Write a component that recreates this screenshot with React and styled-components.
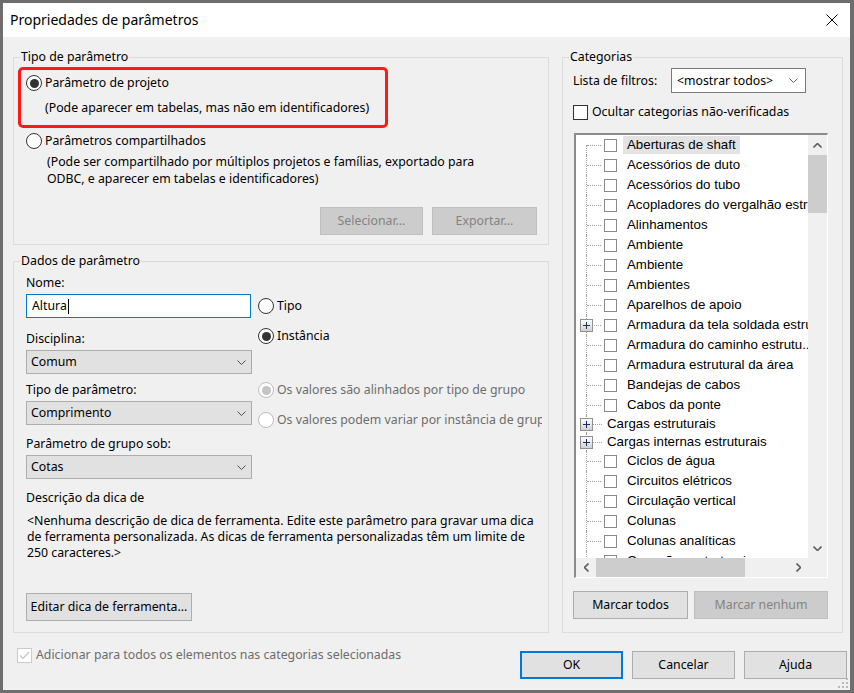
import React from "react"
import styled, { createGlobalStyle, css } from "styled-components"

const GlobalStyle = createGlobalStyle`
  * { box-sizing: border-box; }
  html, body { margin: 0; padding: 0; background: #6e6e6e; }
  body {
    font-family: "Noto Sans", "Liberation Sans", sans-serif;
    font-size: 12.3px;
    line-height: 16px;
    color: #000;
  }
`

const Window = styled.div`
  position: relative;
  width: 854px;
  height: 693px;
  border: 3px solid #6e6e6e;
  border-right-width: 4px;
  background: #f0f0f0;
  display: flex;
  flex-direction: column;
  overflow: hidden;
`

const TitleBar = styled.div`
  height: 34px;
  flex: none;
  background: #fff;
  display: flex;
  align-items: center;
  justify-content: space-between;
  padding: 0 12px 0 7px;
`

const Title = styled.div`
  font-size: 14px;
  line-height: 20px;
`

const Body = styled.div`
  flex: 1;
  display: flex;
  flex-direction: column;
  padding: 12px 7px 0 10px;
`

const Main = styled.div`
  height: 584px;
  display: flex;
  gap: 13px;
`

const LeftCol = styled.div`
  width: 536px;
  display: flex;
  flex-direction: column;
  gap: 8px;
`

const Group = styled.fieldset`
  margin: 0;
  padding: 0;
  min-width: 0;
  border: 1px solid #dcdcdc;
  display: flex;
  flex-direction: column;
  ${(p) => p.$grow && css`flex: 1;`}
  ${(p) => p.$w && css`width: ${p.$w}px;`}
`

const Legend = styled.legend`
  margin-left: 6px;
  padding: 0 1px;
  line-height: 16px;
`

/* ---------- Tipo de parâmetro ---------- */

const TypeContent = styled.div`
  padding: 2px 11px 9px 4px;
  display: flex;
  flex-direction: column;
`

const Highlight = styled.div`
  width: 370px;
  height: 61px;
  border: 3px solid #ff1a1a;
  border-radius: 5px;
  padding: 5px 0 0 5px;
`

const RadioRow = styled.div`
  display: flex;
  align-items: center;
  gap: 3px;
  height: 16px;
  white-space: nowrap;
  margin-top: ${(p) => p.$top || 0}px;
  margin-left: ${(p) => p.$left || 0}px;
  color: ${(p) => (p.$disabled ? "#6d6d6d" : "#000")};
`

const Radio = styled.span`
  flex: none;
  width: 16px;
  height: 16px;
  border-radius: 50%;
  border: 1px solid ${(p) => (p.$disabled ? "#bcbcbc" : "#333")};
  background: #fff;
  display: flex;
  align-items: center;
  justify-content: center;
  &::after {
    content: "";
    display: ${(p) => (p.$checked ? "block" : "none")};
    width: 9px;
    height: 9px;
    border-radius: 50%;
    background: ${(p) => (p.$disabled ? "#c4c4c4" : "#333")};
  }
`

const Note = styled.div`
  margin-top: ${(p) => p.$top || 0}px;
  margin-left: ${(p) => p.$left || 0}px;
  line-height: ${(p) => p.$lh || 16}px;
  white-space: nowrap;
`

const ButtonRow = styled.div`
  display: flex;
  justify-content: ${(p) => p.$justify || "flex-start"};
  gap: ${(p) => p.$gap || 0}px;
  margin-top: ${(p) => p.$top || 0}px;
`

const Button = styled.button`
  font: inherit;
  width: ${(p) => p.$w}px;
  height: 28px;
  padding: 0;
  background: #e1e1e1;
  border: 1px solid #adadad;
  color: #000;
  display: flex;
  align-items: center;
  justify-content: center;
  flex: none;
  ${(p) =>
    p.$disabled &&
    css`
      background: #cccccc;
      border-color: #bfbfbf;
      color: #838383;
    `}
  ${(p) =>
    p.$default &&
    css`
      border: 2px solid #0078d7;
    `}
`

/* ---------- Dados de parâmetro ---------- */

const DataContent = styled.div`
  flex: 1;
  padding: 6px 6px 11px 12px;
  display: flex;
  flex-direction: column;
`

const DataGrid = styled.div`
  display: grid;
  grid-template-columns: 226px 1fr;
  column-gap: 6px;
`

const FieldStack = styled.div`
  display: flex;
  flex-direction: column;
`

const OptionStack = styled.div`
  display: flex;
  flex-direction: column;
  overflow: hidden;
`

const Field = styled.div`
  display: flex;
  flex-direction: column;
  gap: 3px;
  margin-top: ${(p) => p.$top || 0}px;
`

const TextInput = styled.div`
  width: 225px;
  height: 24px;
  background: #fff;
  border: 1px solid #0078d7;
  padding-left: 5px;
  display: flex;
  align-items: center;
`

const Caret = styled.span`
  width: 1px;
  height: 15px;
  background: #000;
  margin-left: 1px;
`

const Combo = styled.div`
  width: ${(p) => p.$w || 226}px;
  height: ${(p) => p.$h || 24}px;
  background: ${(p) => (p.$white ? "#fff" : "#e1e1e1")};
  border: 1px solid ${(p) => (p.$white ? "#7a7a7a" : "#adadad")};
  padding: 0 ${(p) => p.$pr || 5}px 0 ${(p) => p.$pl || 4}px;
  display: flex;
  align-items: center;
  justify-content: space-between;
  flex: none;
`

const Paragraph = styled.div`
  margin: 7px 0 0 1px;
  line-height: 16px;
  white-space: nowrap;
`

/* ---------- Categorias ---------- */

const CatContent = styled.div`
  flex: 1;
  padding: 3px 0 13px 10px;
  display: flex;
  flex-direction: column;
`

const FilterRow = styled.div`
  display: flex;
  align-items: center;
  height: 25px;
`

const FilterLabel = styled.div`
  width: 98px;
`

const CheckRow = styled.div`
  display: flex;
  align-items: center;
  gap: 4px;
  height: 16px;
  white-space: nowrap;
  margin-top: ${(p) => p.$top || 0}px;
  margin-left: ${(p) => p.$left || 0}px;
  color: ${(p) => (p.$disabled ? "#6d6d6d" : "#000")};
`

const CheckBox = styled.span`
  flex: none;
  width: ${(p) => p.$size || 15}px;
  height: ${(p) => p.$size || 15}px;
  background: #fff;
  border: 1px solid ${(p) => p.$border || "#333"};
  display: flex;
  align-items: center;
  justify-content: center;
`

const Tree = styled.div`
  width: 254px;
  height: 445px;
  margin: 13px 0 0 1px;
  border-style: solid;
  border-width: 2px 1px 1px 2px;
  border-color: #8c8c8c #ffffff #ffffff #8c8c8c;
  background: #fff;
  display: grid;
  grid-template-columns: 1fr 19px;
  grid-template-rows: 1fr 19px;
`

const Viewport = styled.div`
  overflow: hidden;
  padding-left: 10px;
  font-family: "Liberation Sans", Arial, sans-serif;
  font-size: 13.3px;
`

const TreeRow = styled.div`
  display: flex;
  align-items: center;
  height: ${(p) => (p.$box ? 20 : 18)}px;
  white-space: nowrap;
`

const Connector = styled.span`
  position: relative;
  flex: none;
  align-self: stretch;
  width: ${(p) => (p.$box ? 18 : 17)}px;
  border-left: 1px dotted #a0a0a0;
  ${(p) => p.$first && css`border-left-color: transparent;`}
  &::before {
    content: "";
    display: ${(p) => (p.$first ? "block" : "none")};
    position: absolute;
    left: -1px;
    top: 50%;
    bottom: 0;
    border-left: 1px dotted #a0a0a0;
  }
  &::after {
    content: "";
    position: absolute;
    left: 0;
    right: ${(p) => (p.$box ? 3 : 1)}px;
    top: 50%;
    border-top: 1px dotted #a0a0a0;
  }
`

const Expander = styled.svg`
  position: absolute;
  left: -7px;
  top: 50%;
  margin-top: -6px;
  z-index: 1;
`

const TreeBox = styled.span`
  flex: none;
  width: 13px;
  height: 13px;
  border: 1px solid #8a8a8a;
  background: #fff;
`

const TreeLabel = styled.span`
  height: 18px;
  line-height: 18px;
  padding: 0 4px;
  margin-left: ${(p) => (p.$box ? 6 : 0)}px;
  background: ${(p) => (p.$selected ? "#e3e3e3" : "transparent")};
`

const VScroll = styled.div`
  background: #f0f0f0;
  display: flex;
  flex-direction: column;
`

const HScroll = styled.div`
  background: #f0f0f0;
  display: flex;
`

const Corner = styled.div`
  background: #f0f0f0;
`

const Arrow = styled.div`
  flex: none;
  width: ${(p) => (p.$horizontal ? "20px" : "auto")};
  height: ${(p) => (p.$horizontal ? "auto" : "20px")};
  display: flex;
  align-items: center;
  justify-content: center;
`

const Thumb = styled.div`
  flex: none;
  background: #cdcdcd;
  ${(p) => (p.$horizontal ? css`width: ${p.$len}px;` : css`height: ${p.$len}px;`)}
`

const Spacer = styled.div`
  flex: 1;
`

/* ---------- Footer ---------- */

const Footer = styled.div`
  display: flex;
  justify-content: space-between;
  align-items: flex-start;
  padding-top: 14px;
`

const FooterButtons = styled.div`
  display: flex;
  gap: 9px;
  margin: 4px -4px 0 0;
`

const Grip = styled.svg`
  position: absolute;
  right: 1px;
  bottom: 1px;
`

/* ---------- icons ---------- */

const Chevron = ({ dir = "down", color = "#505050", w = 9, sw = 1 }) => {
  const pts = {
    down: "0.5,0.5 4.5,4.5 8.5,0.5",
    up: "0.5,4.5 4.5,0.5 8.5,4.5",
  }
  if (dir === "left" || dir === "right") {
    const p = dir === "left" ? "4.5,0.5 0.5,4.5 4.5,8.5" : "0.5,0.5 4.5,4.5 0.5,8.5"
    return (
      <svg width="5" height="9" viewBox="0 0 5 9">
        <polyline points={p} fill="none" stroke={color} strokeWidth={sw} />
      </svg>
    )
  }
  return (
    <svg width={w} height="5" viewBox="0 0 9 5">
      <polyline points={pts[dir]} fill="none" stroke={color} strokeWidth={sw} />
    </svg>
  )
}

const CloseIcon = () => (
  <svg width="12" height="12" viewBox="0 0 12 12">
    <path d="M0.5 0.5 L11.5 11.5 M11.5 0.5 L0.5 11.5" stroke="#000" strokeWidth="1" />
  </svg>
)

const PlusBox = () => (
  <Expander width="13" height="13" viewBox="0 0 13 13">
    <defs>
      <linearGradient id="pb" x1="0" y1="0" x2="0" y2="1">
        <stop offset="0" stopColor="#ffffff" />
        <stop offset="1" stopColor="#d0d0d0" />
      </linearGradient>
    </defs>
    <rect x="0.5" y="0.5" width="12" height="12" fill="url(#pb)" stroke="#919191" />
    <path d="M3 6.5 H10 M6.5 3 V10" stroke="#1c2c5c" strokeWidth="1" />
  </Expander>
)

const CheckMark = ({ color }) => (
  <svg width="11" height="9" viewBox="0 0 11 9">
    <polyline points="1,4.5 4,7.5 10,1" fill="none" stroke={color} strokeWidth="1.2" />
  </svg>
)

const categories = [
  { t: "Aberturas de shaft", selected: true },
  { t: "Acessórios de duto" },
  { t: "Acessórios do tubo" },
  { t: "Acopladores do vergalhão estrutural" },
  { t: "Alinhamentos" },
  { t: "Ambiente" },
  { t: "Ambiente" },
  { t: "Ambientes" },
  { t: "Aparelhos de apoio" },
  { t: "Armadura da tela soldada estrutural", plus: true },
  { t: "Armadura do caminho estrutu..." },
  { t: "Armadura estrutural da área" },
  { t: "Bandejas de cabos" },
  { t: "Cabos da ponte" },
  { t: "Cargas estruturais", plus: true, nobox: true },
  { t: "Cargas internas estruturais", plus: true, nobox: true },
  { t: "Ciclos de água" },
  { t: "Circuitos elétricos" },
  { t: "Circulação vertical" },
  { t: "Colunas" },
  { t: "Colunas analíticas" },
  { t: "Conexões estruturais" },
]

export default function App() {
  return (
    <>
      <GlobalStyle />
      <Window>
        <TitleBar>
          <Title>Propriedades de parâmetros</Title>
          <CloseIcon />
        </TitleBar>
        <Body>
          <Main>
            <LeftCol>
              <Group>
                <Legend>Tipo de parâmetro</Legend>
                <TypeContent>
                  <Highlight>
                    <RadioRow>
                      <Radio $checked />
                      Parâmetro de projeto
                    </RadioRow>
                    <Note $top={9} $left={19}>
                      (Pode aparecer em tabelas, mas não em identificadores)
                    </Note>
                  </Highlight>
                  <RadioRow $top={5} $left={8}>
                    <Radio />
                    Parâmetros compartilhados
                  </RadioRow>
                  <Note $top={4} $left={29} $lh={17}>
                    (Pode ser compartilhado por múltiplos projetos e famílias, exportado para
                    <br />
                    ODBC, e aparecer em tabelas e identificadores)
                  </Note>
                  <ButtonRow $justify="flex-end" $gap={9} $top={20}>
                    <Button $w={103} $disabled>
                      Selecionar...
                    </Button>
                    <Button $w={105} $disabled>
                      Exportar...
                    </Button>
                  </ButtonRow>
                </TypeContent>
              </Group>

              <Group $grow>
                <Legend>Dados de parâmetro</Legend>
                <DataContent>
                  <DataGrid>
                    <FieldStack>
                      <Field>
                        <span>Nome:</span>
                        <TextInput>
                          Altura
                          <Caret />
                        </TextInput>
                      </Field>
                      <Field $top={13}>
                        <span>Disciplina:</span>
                        <Combo>
                          Comum
                          <Chevron />
                        </Combo>
                      </Field>
                      <Field $top={8}>
                        <span>Tipo de parâmetro:</span>
                        <Combo>
                          Comprimento
                          <Chevron />
                        </Combo>
                      </Field>
                      <Field $top={11}>
                        <span>Parâmetro de grupo sob:</span>
                        <Combo>
                          Cotas
                          <Chevron />
                        </Combo>
                      </Field>
                    </FieldStack>
                    <OptionStack>
                      <RadioRow $top={23}>
                        <Radio />
                        Tipo
                      </RadioRow>
                      <RadioRow $top={14}>
                        <Radio $checked />
                        Instância
                      </RadioRow>
                      <RadioRow $top={38} $disabled>
                        <Radio $checked $disabled />
                        Os valores são alinhados por tipo de grupo
                      </RadioRow>
                      <RadioRow $top={14} $disabled>
                        <Radio $disabled />
                        Os valores podem variar por instância de grupo
                      </RadioRow>
                    </OptionStack>
                  </DataGrid>
                  <Note $top={11}>Descrição da dica de</Note>
                  <Paragraph>
                    &lt;Nenhuma descrição de dica de ferramenta. Edite este parâmetro para gravar uma dica
                    <br />
                    de ferramenta personalizada. As dicas de ferramenta personalizadas têm um limite de
                    <br />
                    250 caracteres.&gt;
                  </Paragraph>
                  <ButtonRow $top={32}>
                    <Button $w={166}>Editar dica de ferramenta...</Button>
                  </ButtonRow>
                </DataContent>
              </Group>
            </LeftCol>

            <Group $w={281}>
              <Legend>Categorias</Legend>
              <CatContent>
                <FilterRow>
                  <FilterLabel>Lista de filtros:</FilterLabel>
                  <Combo $w={135} $h={25} $white $pl={5} $pr={7}>
                    &lt;mostrar todos&gt;
                    <Chevron color="#606060" />
                  </Combo>
                </FilterRow>
                <CheckRow $top={11}>
                  <CheckBox />
                  Ocultar categorias não-verificadas
                </CheckRow>
                <Tree>
                  <Viewport>
                    {categories.map((c, i) => (
                      <TreeRow key={i} $box={!c.nobox}>
                        <Connector $box={!c.nobox} $first={i === 0}>
                          {c.plus && <PlusBox />}
                        </Connector>
                        {!c.nobox && <TreeBox />}
                        <TreeLabel $box={!c.nobox} $selected={c.selected}>
                          {c.t}
                        </TreeLabel>
                      </TreeRow>
                    ))}
                  </Viewport>
                  <VScroll>
                    <Arrow>
                      <Chevron dir="up" color="#606060" sw={1.6} />
                    </Arrow>
                    <Thumb $len={58} />
                    <Spacer />
                    <Arrow>
                      <Chevron dir="down" color="#606060" sw={1.6} />
                    </Arrow>
                  </VScroll>
                  <HScroll>
                    <Arrow $horizontal>
                      <Chevron dir="left" color="#606060" sw={1.6} />
                    </Arrow>
                    <Thumb $horizontal $len={149} />
                    <Spacer />
                    <Arrow $horizontal>
                      <Chevron dir="right" color="#606060" sw={1.6} />
                    </Arrow>
                  </HScroll>
                  <Corner />
                </Tree>
                <ButtonRow $gap={6} $top={13}>
                  <Button $w={115}>Marcar todos</Button>
                  <Button $w={134} $disabled>
                    Marcar nenhum
                  </Button>
                </ButtonRow>
              </CatContent>
            </Group>
          </Main>

          <Footer>
            <CheckRow $left={4} $disabled>
              <CheckBox $border="#cccccc">
                <CheckMark color="#c4c4c4" />
              </CheckBox>
              Adicionar para todos os elementos nas categorias selecionadas
            </CheckRow>
            <FooterButtons>
              <Button $w={103} $default>
                OK
              </Button>
              <Button $w={103}>Cancelar</Button>
              <Button $w={103}>Ajuda</Button>
            </FooterButtons>
          </Footer>
        </Body>
        <Grip width="11" height="11" viewBox="0 0 11 11">
          {[
            [8, 0],
            [8, 4],
            [4, 4],
            [8, 8],
            [4, 8],
            [0, 8],
          ].map(([x, y], i) => (
            <rect key={i} x={x} y={y} width="2" height="2" fill="#b8b8b8" />
          ))}
        </Grip>
      </Window>
    </>
  )
}
